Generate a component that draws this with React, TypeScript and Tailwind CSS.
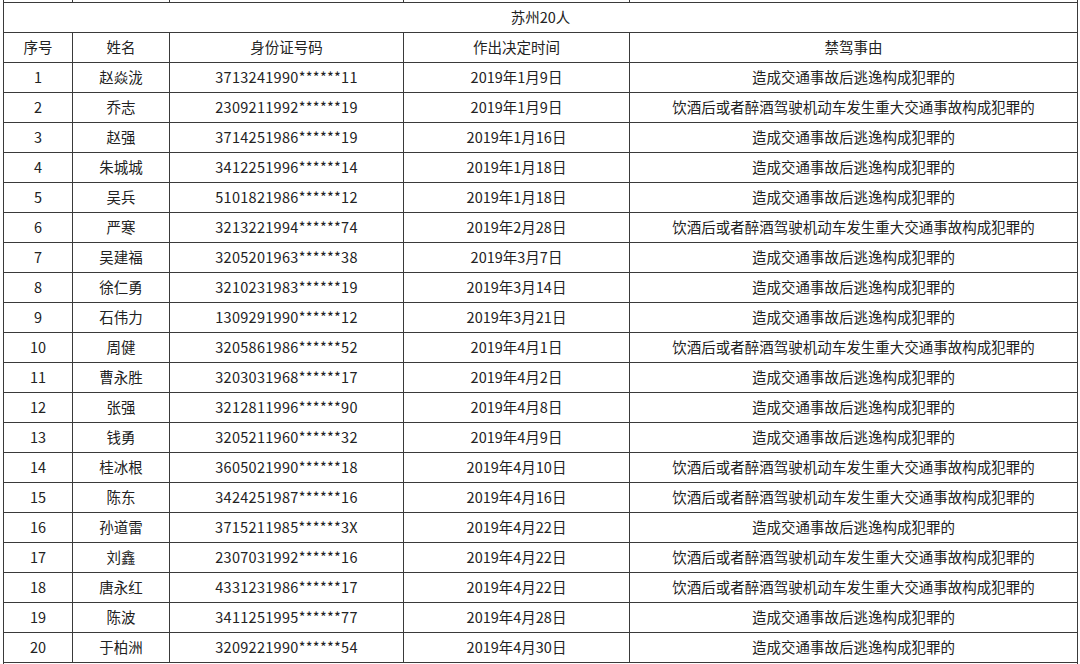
import React from "react";

const rows: [string, string, string, string, string][] = [
  ["1", "赵焱泷", "3713241990******11", "2019年1月9日", "A"],
  ["2", "乔志", "2309211992******19", "2019年1月9日", "B"],
  ["3", "赵强", "3714251986******19", "2019年1月16日", "A"],
  ["4", "朱城城", "3412251996******14", "2019年1月18日", "A"],
  ["5", "吴兵", "5101821986******12", "2019年1月18日", "A"],
  ["6", "严寒", "3213221994******74", "2019年2月28日", "B"],
  ["7", "吴建福", "3205201963******38", "2019年3月7日", "A"],
  ["8", "徐仁勇", "3210231983******19", "2019年3月14日", "A"],
  ["9", "石伟力", "1309291990******12", "2019年3月21日", "A"],
  ["10", "周健", "3205861986******52", "2019年4月1日", "B"],
  ["11", "曹永胜", "3203031968******17", "2019年4月2日", "A"],
  ["12", "张强", "3212811996******90", "2019年4月8日", "A"],
  ["13", "钱勇", "3205211960******32", "2019年4月9日", "A"],
  ["14", "桂冰根", "3605021990******18", "2019年4月10日", "B"],
  ["15", "陈东", "3424251987******16", "2019年4月16日", "B"],
  ["16", "孙道雷", "3715211985******3X", "2019年4月22日", "A"],
  ["17", "刘鑫", "2307031992******16", "2019年4月22日", "B"],
  ["18", "唐永红", "4331231986******17", "2019年4月22日", "B"],
  ["19", "陈波", "3411251995******77", "2019年4月28日", "A"],
  ["20", "于柏洲", "3209221990******54", "2019年4月30日", "A"],
];

const reasonA = "造成交通事故后逃逸构成犯罪的";
const reasonB = "饮酒后或者醉酒驾驶机动车发生重大交通事故构成犯罪的";

function Row({ cells }: { cells: React.ReactNode[] }) {
  return (
    <div className="flex h-[30px] border-b border-[#3a3a3a]">
      <div className="w-[69px] shrink-0 border-r border-[#3a3a3a] flex items-center justify-center">{cells[0]}</div>
      <div className="w-[97px] shrink-0 border-r border-[#3a3a3a] flex items-center justify-center">{cells[1]}</div>
      <div className="w-[234px] shrink-0 border-r border-[#3a3a3a] flex items-center justify-center">{cells[2]}</div>
      <div className="w-[226px] shrink-0 border-r border-[#3a3a3a] flex items-center justify-center">{cells[3]}</div>
      <div className="w-[448px] shrink-0 border-r border-[#3a3a3a] flex items-center justify-center">{cells[4]}</div>
    </div>
  );
}

export default function App() {
  return (
    <div
      className="w-[1080px] h-[664px] overflow-hidden bg-white text-[#222222] text-[14.5px] leading-none"
      style={{ fontFamily: '"Noto Sans CJK SC", "Noto Sans", sans-serif' }}
    >
      <div className="ml-[3px] w-[1075px] border-l border-[#3a3a3a]">
        <div className="flex h-[3px] border-b border-[#3a3a3a]">
          <div className="w-[69px] shrink-0 border-r border-[#3a3a3a]" />
          <div className="w-[97px] shrink-0 border-r border-[#3a3a3a]" />
          <div className="w-[234px] shrink-0 border-r border-[#3a3a3a]" />
          <div className="w-[226px] shrink-0 border-r border-[#3a3a3a]" />
          <div className="w-[448px] shrink-0 border-r border-[#3a3a3a]" />
        </div>
        <div className="flex h-[30px] border-b border-[#3a3a3a]">
          <div className="w-[1074px] shrink-0 border-r border-[#3a3a3a] flex items-center justify-center">苏州20人</div>
        </div>
        <Row cells={["序号", "姓名", "身份证号码", "作出决定时间", "禁驾事由"]} />
        {rows.map((r) => (
          <Row
            key={r[0]}
            cells={[
              r[0],
              r[1],
              <span className="tracking-[0.3px]">{r[2]}</span>,
              r[3],
              r[4] === "A" ? reasonA : reasonB,
            ]}
          />
        ))}
        <div className="flex h-[4px]">
          <div className="w-[1074px] shrink-0 border-r border-[#3a3a3a]" />
        </div>
      </div>
    </div>
  );
}
